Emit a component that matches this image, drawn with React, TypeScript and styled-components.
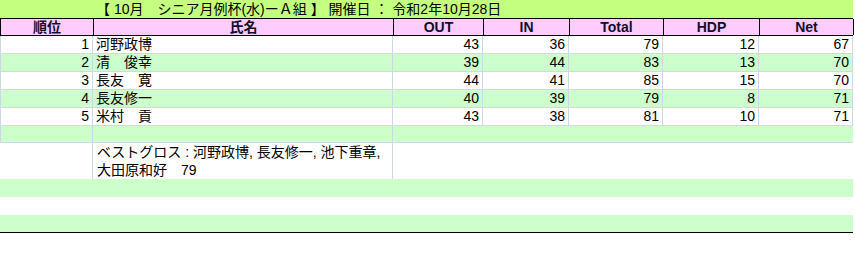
import React from "react"
import styled, { createGlobalStyle } from "styled-components"

const GlobalStyle = createGlobalStyle`
  html, body {
    margin: 0;
    padding: 0;
    background: #ffffff;
  }
  body {
    font-family: "Liberation Sans", "Noto Sans CJK JP", sans-serif;
    color: #000000;
  }
`

// column widths taken from the sheet
const COLS = "93px 300px 90px 86px 94px 96px 94px"

const Sheet = styled.div`
  width: 853px;
  display: flex;
  flex-direction: column;
`

const TitleBar = styled.div`
  height: 18px;
  background: #c4ff80;
  display: grid;
  grid-template-columns: ${COLS};
  align-items: center;
  font-size: 14px;
  white-space: nowrap;
`

const TitleText = styled.div`
  grid-column: 2 / 8;
  padding-left: 3px;
  line-height: 18px;
`

const HeadRow = styled.div`
  display: grid;
  grid-template-columns: ${COLS};
  height: 18px;
  box-sizing: border-box;
  border-top: 1px solid #000;
  border-bottom: 1px solid #000;
  border-left: 1px solid #000;
  background: #ffccff;
`

const HeadCell = styled.div`
  border-right: 1px solid #000;
  text-align: center;
  font-weight: bold;
  font-size: 14px;
  line-height: 16px;
  color: #10102a;
`

const Row = styled.div<{ green?: boolean; h?: number; open?: boolean }>`
  display: grid;
  grid-template-columns: ${COLS};
  height: ${(p) => p.h || 18}px;
  box-sizing: border-box;
  border-bottom: ${(p) => (p.open ? "none" : "1px solid #d0d7e5")};
  background: ${(p) => (p.green ? "#ccffcc" : "#ffffff")};
`

const Cell = styled.div<{ right?: boolean; edge?: boolean }>`
  border-right: 1px solid #d0d7e5;
  border-left: ${(p) => (p.edge ? "1px solid #d0d7e5" : "none")};
  text-align: ${(p) => (p.right ? "right" : "left")};
  padding: 0 3px;
  font-size: 14px;
  line-height: 17px;
  white-space: nowrap;
  overflow: hidden;
`

const Blank = styled.div``

const NoteCell = styled.div`
  margin-left: -1px;
  border-left: 1px solid #d0d7e5;
  border-right: 1px solid #d0d7e5;
  border-bottom: 1px solid #d0d7e5;
  padding: 0 3px 0 4px;
  font-size: 14px;
  line-height: 18px;
  white-space: nowrap;
`

const Band = styled.div<{ green?: boolean; h: number; last?: boolean }>`
  height: ${(p) => p.h}px;
  background: ${(p) => (p.green ? "#ccffcc" : "#ffffff")};
  border-bottom: ${(p) => (p.last ? "1px solid #000" : "none")};
`

const heads = ["順位", "氏名", "OUT", "IN", "Total", "HDP", "Net"]

const players = [
  { rank: 1, name: "河野政博", out: 43, inn: 36, total: 79, hdp: 12, net: 67 },
  { rank: 2, name: "清　俊幸", out: 39, inn: 44, total: 83, hdp: 13, net: 70 },
  { rank: 3, name: "長友　寛", out: 44, inn: 41, total: 85, hdp: 15, net: 70 },
  { rank: 4, name: "長友修一", out: 40, inn: 39, total: 79, hdp: 8, net: 71 },
  { rank: 5, name: "米村　貢", out: 43, inn: 38, total: 81, hdp: 10, net: 71 },
]

export default function App() {
  return (
    <>
      <GlobalStyle />
      <Sheet>
        <TitleBar>
          <Blank />
          <TitleText>【 10月　シニア月例杯(水)ーＡ組 】 開催日 ： 令和2年10月28日</TitleText>
        </TitleBar>
        <HeadRow>
          {heads.map((h) => (
            <HeadCell key={h}>{h}</HeadCell>
          ))}
        </HeadRow>
        {players.map((p, i) => (
          <Row key={p.rank} green={i % 2 === 1}>
            <Cell right edge>{p.rank}</Cell>
            <Cell>{p.name}</Cell>
            <Cell right>{p.out}</Cell>
            <Cell right>{p.inn}</Cell>
            <Cell right>{p.total}</Cell>
            <Cell right>{p.hdp}</Cell>
            <Cell right>{p.net}</Cell>
          </Row>
        ))}
        <Row green h={17}>
          <Cell edge />
          <Cell />
          <Blank />
          <Blank />
          <Blank />
          <Blank />
          <Blank />
        </Row>
        <Row h={36} open>
          <Blank />
          <NoteCell>
            ベストグロス : 河野政博,  長友修一,  池下重章,
            <br />
            大田原和好　79
          </NoteCell>
        </Row>
        <Band green h={18} />
        <Band h={18} />
        <Band green h={17} last />
      </Sheet>
    </>
  )
}
